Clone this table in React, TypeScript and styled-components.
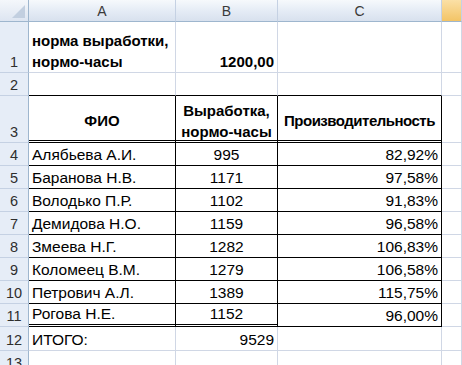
import React from 'react'
import styled, { createGlobalStyle, css } from 'styled-components'

const GlobalStyle = createGlobalStyle`
  html, body {
    margin: 0;
    padding: 0;
    background: #ffffff;
  }
  body {
    font-family: "Liberation Sans", Arial, sans-serif;
  }
`

const GRID = '#d0d7e5'
const INK = '#000000'

type Edge = 'grid' | 'thin' | 'double'

const edge = (kind: Edge) => {
  if (kind === 'thin') return `1px solid ${INK}`
  if (kind === 'double') return `3px double ${INK}`
  return `1px solid ${GRID}`
}

const Sheet = styled.div`
  display: grid;
  grid-template-columns: 29px 147px 102px 164px 20px;
  grid-template-rows: 22px 51px 23px 47px repeat(8, 23px) 24px 23px;
  width: 462px;
  height: 365px;
  overflow: hidden;
`

const Corner = styled.div`
  position: relative;
  background: linear-gradient(#f4f7fb, #dde5f1);
  border-right: 1px solid #9eb6ce;
  border-bottom: 1px solid #9eb6ce;
  box-sizing: border-box;

  &::after {
    content: '';
    position: absolute;
    right: 3px;
    bottom: 3px;
    width: 0;
    height: 0;
    border-left: 13px solid transparent;
    border-bottom: 13px solid #c2cfe0;
  }
`

const ColHead = styled.div<{ $active?: boolean }>`
  display: flex;
  align-items: center;
  justify-content: center;
  box-sizing: border-box;
  font-size: 14px;
  color: #3a3a3a;
  border-right: 1px solid #c5d1e3;
  border-bottom: 1px solid #9eb6ce;
  background: ${(p) =>
    p.$active
      ? 'linear-gradient(#fbe0a6, #f3c466)'
      : 'linear-gradient(#f6f9fc 0%, #e4ebf5 55%, #d8e1ee 100%)'};
`

const RowHead = styled.div`
  display: flex;
  align-items: flex-end;
  justify-content: center;
  box-sizing: border-box;
  padding-bottom: 0;
  font-size: 14.5px;
  line-height: 20px;
  color: #2e2e2e;
  background: #e6edf7;
  border-right: 1px solid #9eb6ce;
  border-bottom: 1px solid #c5d1e3;
`

const Cell = styled.div<{
  $align?: 'left' | 'center' | 'right'
  $valign?: 'end' | 'center'
  $bold?: boolean
  $tight?: boolean
  $right?: Edge
  $bottom?: Edge
}>`
  display: flex;
  flex-direction: column;
  box-sizing: border-box;
  padding: 0 3px 0 3px;
  font-size: 15.5px;
  line-height: 20px;
  color: #000;
  white-space: nowrap;
  overflow: hidden;
  justify-content: ${(p) => (p.$valign === 'center' ? 'center' : 'flex-end')};
  align-items: ${(p) =>
    p.$align === 'center' ? 'center' : p.$align === 'right' ? 'flex-end' : 'flex-start'};
  text-align: ${(p) => p.$align || 'left'};
  border-right: ${(p) => edge(p.$right || 'grid')};
  border-bottom: ${(p) => edge(p.$bottom || 'grid')};
  ${(p) =>
    p.$bold &&
    css`
      font-weight: bold;
      font-size: 15px;
      line-height: 21px;
    `}
  ${(p) =>
    p.$tight &&
    css`
      letter-spacing: -0.5px;
    `}
  ${(p) =>
    p.$valign === 'center' &&
    css`
      padding-top: 5px;
    `}
`

const rows = [
  { name: 'Алябьева А.И.', value: 995, pct: '82,92%' },
  { name: 'Баранова Н.В.', value: 1171, pct: '97,58%' },
  { name: 'Володько П.Р.', value: 1102, pct: '91,83%' },
  { name: 'Демидова Н.О.', value: 1159, pct: '96,58%' },
  { name: 'Змеева Н.Г.', value: 1282, pct: '106,83%' },
  { name: 'Коломеец В.М.', value: 1279, pct: '106,58%' },
  { name: 'Петрович А.Л.', value: 1389, pct: '115,75%' },
  { name: 'Рогова Н.Е.', value: 1152, pct: '96,00%' },
]

export default function App(): JSX.Element {
  return (
    <>
      <GlobalStyle />
      <Sheet>
        <Corner />
        <ColHead>A</ColHead>
        <ColHead>B</ColHead>
        <ColHead>C</ColHead>
        <ColHead $active />

        <RowHead>1</RowHead>
        <Cell $bold>
          <span>норма выработки,</span>
          <span>нормо-часы</span>
        </Cell>
        <Cell $bold $align="right">
          1200,00
        </Cell>
        <Cell />
        <Cell />

        <RowHead>2</RowHead>
        <Cell $bottom="thin" />
        <Cell $bottom="thin" />
        <Cell $bottom="thin" />
        <Cell />

        <RowHead>3</RowHead>
        <Cell $bold $align="center" $valign="center" $right="thin" $bottom="double">
          ФИО
        </Cell>
        <Cell $bold $align="center" $valign="center" $right="thin" $bottom="double">
          <span>Выработка,</span>
          <span>нормо-часы</span>
        </Cell>
        <Cell $bold $tight $align="center" $valign="center" $right="thin" $bottom="double">
          Производительность
        </Cell>
        <Cell />

        {rows.map((r, i) => {
          const last = i === rows.length - 1
          return (
            <React.Fragment key={r.name}>
              <RowHead>{i + 4}</RowHead>
              <Cell $right="thin" $bottom={last ? 'double' : 'thin'}>
                {r.name}
              </Cell>
              <Cell $align="center" $right="thin" $bottom={last ? 'double' : 'thin'}>
                {r.value}
              </Cell>
              <Cell $align="right" $right="thin" $bottom="thin">
                {r.pct}
              </Cell>
              <Cell />
            </React.Fragment>
          )
        })}

        <RowHead>12</RowHead>
        <Cell>ИТОГО:</Cell>
        <Cell $align="right">9529</Cell>
        <Cell />
        <Cell />

        <RowHead>13</RowHead>
        <Cell />
        <Cell />
        <Cell />
        <Cell />
      </Sheet>
    </>
  )
}
